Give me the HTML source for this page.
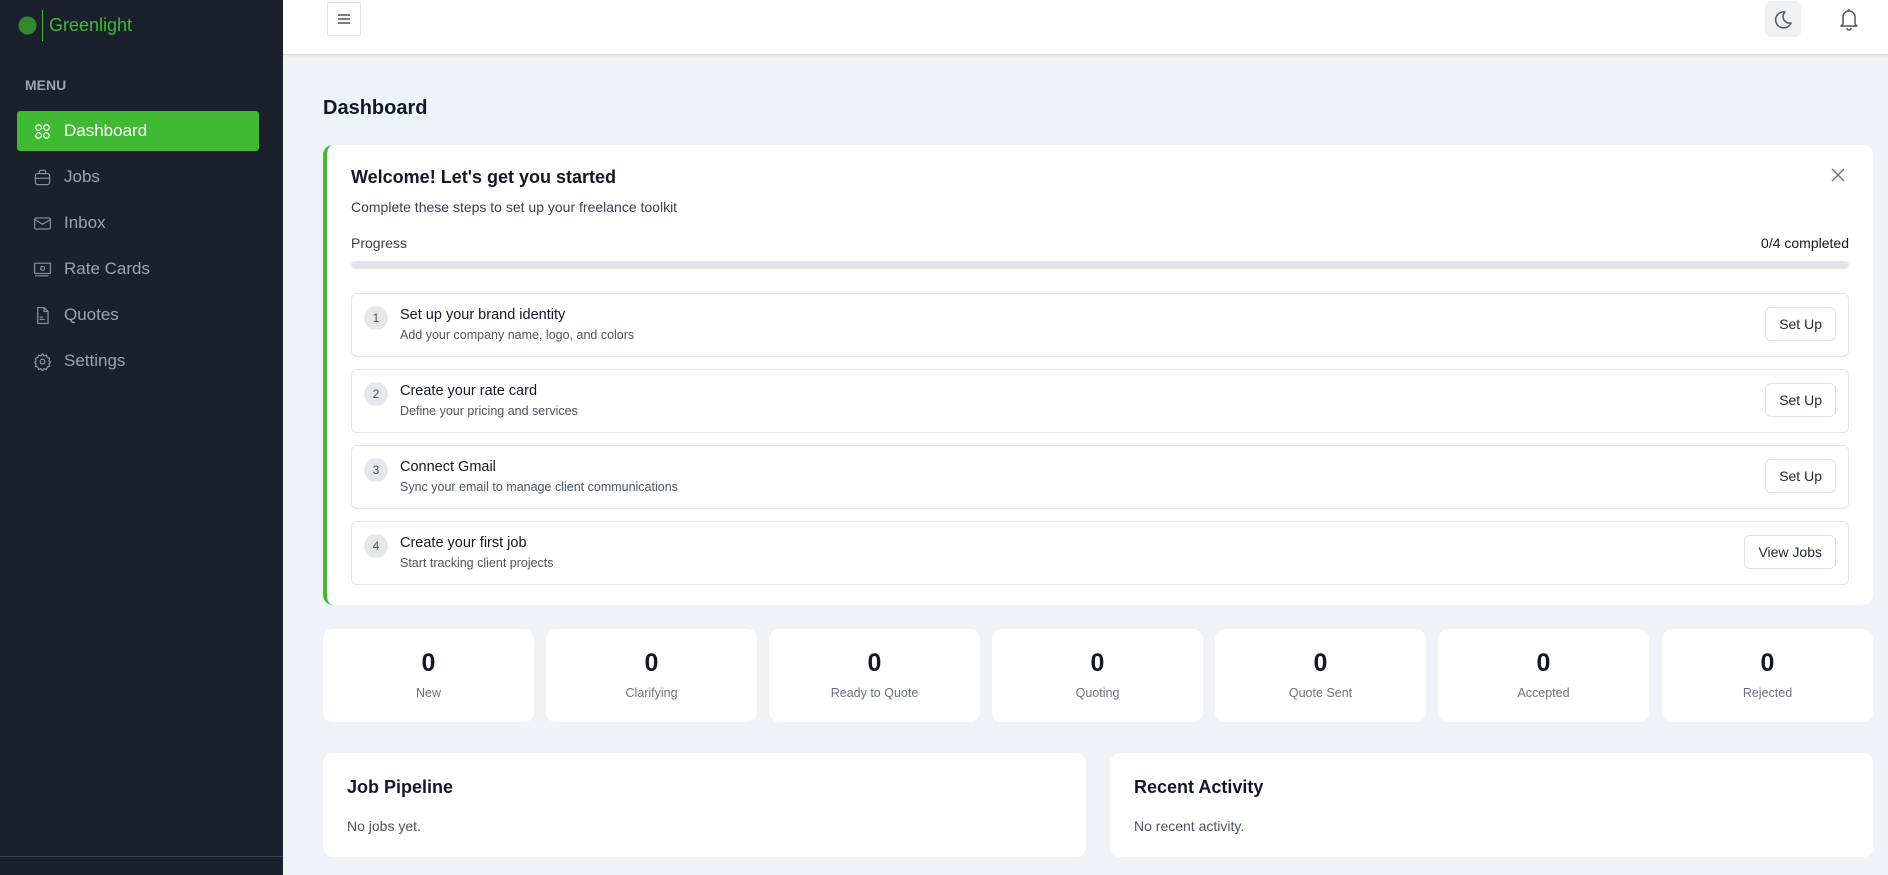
<!DOCTYPE html>
<html><head><meta charset="utf-8"><style>
*{box-sizing:border-box;margin:0;padding:0}
body{width:1888px;height:875px;overflow:hidden;background:#eff2f6;font-family:"Liberation Sans",sans-serif;position:relative;color:#111827}
.sb{position:absolute;left:0;top:0;width:283px;height:875px;background:#1b202c}
.abs{position:absolute}
.nav{position:absolute;left:17px;width:242px;height:40px;border-radius:3px;color:#9ca3af;font-size:17px;display:flex;align-items:center;padding-left:16px}
.nav svg{width:19px;height:19px;margin-right:12px;fill:none;stroke:#8b93a3;stroke-width:1.5;stroke-linecap:round;stroke-linejoin:round}
.nav.act{background:#3fba32;color:#fff}
.nav.act svg{stroke:#fff}
.card{position:absolute;background:#fff;border-radius:10px}
.step{position:absolute;left:351px;width:1498px;height:64px;border:1px solid #e2e5ea;border-radius:6px;background:#fff}
.num{position:absolute;left:12px;top:12px;width:24px;height:24px;border-radius:50%;background:#e5e7eb;color:#4b5563;font-size:12px;text-align:center;line-height:24px}
.st{position:absolute;left:48px;top:13px;font-size:14.5px;color:#111827}
.sd{position:absolute;left:48px;top:34px;font-size:12.5px;color:#4b5563}
.btn{position:absolute;right:12px;top:13px;height:34px;border:1px solid #dfe2e8;border-radius:6px;font-size:14px;color:#1f2937;padding:0 13px;line-height:32px;background:#fff}
.stat{position:absolute;top:629px;width:211px;height:93px;background:#fff;border-radius:10px;text-align:center}
.stat b{display:block;font-size:25px;margin-top:20px;color:#111827}
.stat span{display:block;font-size:12.5px;color:#6b7280;margin-top:8px}
</style></head><body>
<div class="sb">
  <svg class="abs" style="left:18px;top:16px" width="19" height="19"><circle cx="9.5" cy="9.5" r="9" fill="#2f8a2b"/></svg>
  <div class="abs" style="left:42px;top:10px;width:1px;height:31px;background:#3fba32"></div>
  <div class="abs" style="left:49px;top:15px;font-size:18px;color:#3fba32">Greenlight</div>
  <div class="abs" style="left:25px;top:77px;font-size:14px;color:#9ca3af;font-weight:bold">MENU</div>
  <div class="nav act" style="top:111px"><svg viewBox="0 0 24 24"><circle cx="7" cy="7" r="3.5"/><circle cx="17" cy="7" r="3.5"/><circle cx="7" cy="17" r="3.5"/><circle cx="17" cy="17" r="3.5"/></svg>Dashboard</div>
  <div class="nav" style="top:157px"><svg viewBox="0 0 24 24"><rect x="3" y="7" width="18" height="14" rx="3"/><path d="M8 7V5a2 2 0 0 1 2-2h4a2 2 0 0 1 2 2v2M3 13h18"/></svg>Jobs</div>
  <div class="nav" style="top:203px"><svg viewBox="0 0 24 24"><rect x="2" y="5" width="20" height="14" rx="2"/><path d="M2 7l10 6 10-6"/></svg>Inbox</div>
  <div class="nav" style="top:249px"><svg viewBox="0 0 24 24"><rect x="2" y="4" width="20" height="13" rx="1"/><circle cx="12" cy="10.5" r="2.5"/><path d="M3 20h16"/></svg>Rate Cards</div>
  <div class="nav" style="top:295px"><svg viewBox="0 0 24 24"><path d="M14 2H6v20h13V7z M14 2v5h5 M9 17h5 M9 14h3"/></svg>Quotes</div>
  <div class="nav" style="top:341px"><svg viewBox="0 0 24 24"><circle cx="12" cy="12" r="3"/><path d="M12 2l2 3 3-1 1 3 3 1-1 3 2 2-2 2 1 3-3 1-1 3-3-1-2 3-2-3-3 1-1-3-3-1 1-3-2-2 2-2-1-3 3-1 1-3 3 1z"/></svg>Settings</div>
  <div class="abs" style="left:0;top:856px;width:283px;height:1px;background:#374151"></div>
</div>
<div class="abs" style="left:283px;top:0;width:1605px;height:55px;background:#fff;border-bottom:1px solid #d6d9df;box-shadow:0 1px 2px rgba(0,0,0,.06)"></div>
<div class="abs" style="left:327px;top:2px;width:34px;height:34px;border:1px solid #dfe2e8;border-radius:2px;background:#fff"><svg width="32" height="32" viewBox="0 0 32 32"><path d="M10 12h12M10 16h12M10 20h12" stroke="#4b5563" stroke-width="1.5"/></svg></div>
<div class="abs" style="left:1765px;top:1px;width:36px;height:36px;border-radius:6px;background:#eef0f4"><svg width="36" height="36" viewBox="0 0 36 36"><path d="M20 11a8 8 0 1 0 6 11a6.5 6.5 0 0 1-6-11z" fill="none" stroke="#4b5563" stroke-width="1.5" stroke-linejoin="round"/></svg></div>
<svg class="abs" style="left:1837px;top:6px" width="24" height="26" viewBox="0 0 24 26"><path d="M6 18V11a6 6 0 0 1 12 0v7l2 2H4z M10 22a2 2 0 0 0 4 0 M12 3v2" fill="none" stroke="#4b5563" stroke-width="1.5" stroke-linejoin="round"/></svg>
<div class="abs" style="left:323px;top:97px;font-size:20px;font-weight:bold">Dashboard</div>
<div class="card" style="left:323px;top:145px;width:1550px;height:460px;border-left:4px solid #3fba32"></div>
<div class="abs" style="left:351px;top:167px;font-size:18px;font-weight:bold;color:#111827">Welcome! Let's get you started</div>
<div class="abs" style="left:351px;top:199px;font-size:14px;color:#374151">Complete these steps to set up your freelance toolkit</div>
<div class="abs" style="left:351px;top:235px;font-size:14px;color:#374151">Progress</div>
<div class="abs" style="left:1600px;width:249px;text-align:right;top:235px;font-size:14px;color:#111827">0/4 completed</div>
<div class="abs" style="left:351px;top:261px;width:1498px;height:8px;border-radius:4px;background:#e2e4e9"></div>
<svg class="abs" style="left:1830px;top:167px" width="16" height="16"><path d="M2 2l12 12M14 2L2 14" stroke="#6b7280" stroke-width="1.4"/></svg>
<div class="step" style="top:293px"><div class="num">1</div><div class="st">Set up your brand identity</div><div class="sd">Add your company name, logo, and colors</div><div class="btn">Set Up</div></div>
<div class="step" style="top:369px"><div class="num">2</div><div class="st">Create your rate card</div><div class="sd">Define your pricing and services</div><div class="btn">Set Up</div></div>
<div class="step" style="top:445px"><div class="num">3</div><div class="st">Connect Gmail</div><div class="sd">Sync your email to manage client communications</div><div class="btn">Set Up</div></div>
<div class="step" style="top:521px"><div class="num">4</div><div class="st">Create your first job</div><div class="sd">Start tracking client projects</div><div class="btn">View Jobs</div></div>
<div class="stat" style="left:323px"><b>0</b><span>New</span></div>
<div class="stat" style="left:546px"><b>0</b><span>Clarifying</span></div>
<div class="stat" style="left:769px"><b>0</b><span>Ready to Quote</span></div>
<div class="stat" style="left:992px"><b>0</b><span>Quoting</span></div>
<div class="stat" style="left:1215px"><b>0</b><span>Quote Sent</span></div>
<div class="stat" style="left:1438px"><b>0</b><span>Accepted</span></div>
<div class="stat" style="left:1662px"><b>0</b><span>Rejected</span></div>
<div class="card" style="left:323px;top:753px;width:763px;height:104px"><div class="abs" style="left:24px;top:24px;font-size:18px;font-weight:bold">Job Pipeline</div><div class="abs" style="left:24px;top:65px;font-size:14px;color:#4b5563">No jobs yet.</div></div>
<div class="card" style="left:1110px;top:753px;width:763px;height:104px"><div class="abs" style="left:24px;top:24px;font-size:18px;font-weight:bold">Recent Activity</div><div class="abs" style="left:24px;top:65px;font-size:14px;color:#4b5563">No recent activity.</div></div>
</body></html>
